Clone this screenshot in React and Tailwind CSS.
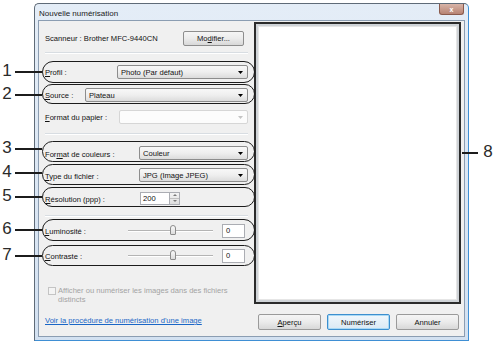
import React from 'react';

const Arrow = ({ color = '#000' }) => (
  <svg width="5" height="3" viewBox="0 0 5 3" className="shrink-0">
    <path d="M0 0H5L2.5 3Z" fill={color} />
  </svg>
);

function Combo({ text, w, disabled }) {
  return (
    <div
      className={`ml-auto flex h-[14px] items-center rounded-[2px] border pl-[3px] pr-[4px] ${w} ${
        disabled
          ? 'border-[#d6d6d6] bg-[#fcfcfc]'
          : 'border-[#8d8d8d] bg-linear-to-b from-[#f8f8f8] via-[#efefef] to-[#dcdcdc]'
      }`}
    >
      <span className="flex-1 truncate">{text}</span>
      <Arrow color={disabled ? '#c4c4c4' : '#000'} />
    </div>
  );
}

const U = ({ children }) => <span className="underline underline-offset-[1px]">{children}</span>;

function Sep() {
  return <div className="h-px w-full bg-[#d8dde2] shadow-[0_1px_0_#ffffff]" />;
}

function Slider() {
  return (
    <div className="relative h-[15px] w-[85px]">
      <div className="absolute left-0 right-0 top-[7px] h-[2px] border-t border-[#b4b4b4] bg-white" />
      <div className="absolute left-[42px] top-[2px] h-[10px] w-[6px] rounded-t-[3px] rounded-b-[1px] border border-[#8c8c8c] bg-linear-to-b from-[#fbfbfb] to-[#dcdcdc]" />
    </div>
  );
}

function Btn({ children, focus }) {
  return (
    <div
      className={`flex h-[16px] w-[63px] items-center justify-center rounded-[2px] border ${
        focus
          ? 'border-[#3c8fcf] bg-linear-to-b from-[#f0f7fc] to-[#dbe9f4] shadow-[inset_0_0_0_1px_#a9d9f5]'
          : 'border-[#9a9a9a] bg-linear-to-b from-[#f5f5f5] via-[#ebebeb] to-[#d8d8d8]'
      }`}
    >
      {children}
    </div>
  );
}

const ellipses = [
  { top: 61, h: 22 },
  { top: 84, h: 20 },
  { top: 141, h: 21 },
  { top: 164, h: 21 },
  { top: 187, h: 20 },
  { top: 219, h: 22 },
  { top: 245, h: 21 },
];

const nums = [
  { n: '1', y: 71 },
  { n: '2', y: 94 },
  { n: '3', y: 148 },
  { n: '4', y: 172 },
  { n: '5', y: 196 },
  { n: '6', y: 229 },
  { n: '7', y: 255 },
];

export default function App() {
  return (
    <div className="relative h-[346px] w-[500px] overflow-hidden bg-white font-['Liberation_Sans',Arial,sans-serif] text-[7.6px] leading-[9px] text-[#111]">
      {/* Window */}
      <div className="ml-[34px] mt-[3px] flex h-[338px] w-[435px] flex-col rounded-t-[5px] border border-[#5f6b78] border-r-[#3f8fd4] border-b-[#3f8fd4] bg-linear-to-b from-[#e4edf7] to-[#d3e1f1]">
        {/* Title bar */}
        <div className="flex h-[16px] items-start pl-[4px] pr-[4px]">
          <span className="mt-[5px] text-[8px] leading-[9px] text-[#1a1a1a]">Nouvelle numérisation</span>
          <div className="ml-auto flex h-[11px] w-[25px] items-center justify-center rounded-b-[3px] border border-t-0 border-[#8a5a4c] bg-linear-to-b from-[#d8b4a8] to-[#b78474]">
            <span className="text-[7px] font-bold leading-[7px] text-white">x</span>
          </div>
        </div>
        {/* Client */}
        <div className="mx-[3px] flex h-[317px] border border-[#8b9db2] bg-[#f0f0f0]">
          {/* Left column */}
          <div className="flex w-[215px] flex-col pl-[6px] pr-[6px] pt-[10px]">
            <div className="flex h-[15px] items-center">
              <span>Scanneur : Brother MFC-9440CN</span>
              <div className="ml-auto mr-[4px] flex h-[15px] w-[61px] items-center justify-center rounded-[2px] border border-[#8d8d8d] bg-linear-to-b from-[#f5f5f5] via-[#ebebeb] to-[#d8d8d8]">
                Mo<U>d</U>ifier...
              </div>
            </div>
            <div className="mt-[6px]"><Sep /></div>
            <div className="mt-[12px] flex h-[14px] items-center">
              <span><U>P</U>rofil :</span>
              <Combo text="Photo (Par défaut)" w="w-[131px]" />
            </div>
            <div className="mt-[9px] flex h-[14px] items-center">
              <span><U>S</U>ource :</span>
              <Combo text="Plateau" w="w-[163px]" />
            </div>
            <div className="mt-[8px] flex h-[14px] items-center">
              <span><U>F</U>ormat du papier :</span>
              <Combo text="" w="w-[129px]" disabled />
            </div>
            <div className="mt-[9px]"><Sep /></div>
            <div className="mt-[12px] flex h-[14px] items-center">
              <span className="mt-[3px]">For<U>m</U>at de couleurs :</span>
              <Combo text="Couleur" w="w-[109px]" />
            </div>
            <div className="mt-[8px] flex h-[14px] items-center">
              <span className="mt-[3px]"><U>T</U>ype du fichier :</span>
              <Combo text="JPG (Image JPEG)" w="w-[109px]" />
            </div>
            <div className="mt-[9px] flex h-[14px] items-center">
              <span className="mt-[2px] w-[95px]"><U>R</U>ésolution (ppp) :</span>
              <div className="flex h-[13px] w-[30px] items-center border border-[#abadb3] bg-white pl-[2px]">200</div>
              <div className="flex h-[13px] w-[10px] flex-col border border-l-0 border-[#abadb3] bg-linear-to-b from-[#f4f4f4] to-[#dedede]">
                <div className="flex flex-1 items-center justify-center border-b border-[#c0c0c0]">
                  <svg width="4" height="2" viewBox="0 0 4 2"><path d="M0 2H4L2 0Z" fill="#7a7a7a" /></svg>
                </div>
                <div className="flex flex-1 items-center justify-center">
                  <svg width="4" height="2" viewBox="0 0 4 2"><path d="M0 0H4L2 2Z" fill="#7a7a7a" /></svg>
                </div>
              </div>
            </div>
            <div className="mt-[10px]"><Sep /></div>
            <div className="mt-[7px] flex h-[15px] items-center">
              <span className="mt-[2px] w-[83px]"><U>L</U>uminosité :</span>
              <Slider />
              <div className="ml-[9px] flex h-[14px] w-[23px] items-center border border-[#abadb3] bg-white pl-[3px]">0</div>
            </div>
            <div className="mt-[10px] flex h-[15px] items-center">
              <span className="mt-[2px] w-[83px]"><U>C</U>ontraste :</span>
              <Slider />
              <div className="ml-[9px] flex h-[14px] w-[23px] items-center border border-[#abadb3] bg-white pl-[3px]">0</div>
            </div>
            <div className="mt-[23px] flex text-[#a3a3a3]">
              <div className="ml-[3px] mt-[1px] h-[8px] w-[8px] shrink-0 border border-[#c4c4c4] bg-[#f4f4f4]" />
              <div className="ml-[2px]">
                <div>Afficher ou numériser les images dans des fichiers</div>
                <div>distincts</div>
              </div>
            </div>
            <div className="mt-[12px] text-[#1a66c6] underline underline-offset-[1px]">
              Voir la procédure de numérisation d'une image
            </div>
          </div>
          {/* Right column */}
          <div className="flex w-[207px] flex-col pt-[1px]">
            <div className="h-[282px] w-[207px] border-2 border-[#2b2b2b] bg-[#cfd3d7] p-[2px]">
              <div className="h-full w-full border border-[#e6e6e6] bg-white" />
            </div>
            <div className="mt-[10px] flex gap-[6px] pl-[4px]">
              <Btn><U>A</U>perçu</Btn>
              <Btn focus>Numériser</Btn>
              <Btn>Annuler</Btn>
            </div>
          </div>
        </div>
      </div>

      {/* Annotation overlays */}
      {ellipses.map((e, i) => (
        <div
          key={i}
          className="absolute left-[42px] w-[213px] rounded-full border-[1.5px] border-[#1c1c1c]"
          style={{ top: e.top, height: e.h }}
        />
      ))}
      {nums.map((d) => (
        <React.Fragment key={d.n}>
          <div
            className="absolute left-[1px] w-[12px] text-center text-[17px] leading-[18px] text-[#2a2a2a]"
            style={{ top: d.y - 9 }}
          >
            {d.n}
          </div>
          <div className="absolute left-[15px] h-[1.5px] w-[27px] bg-[#1c1c1c]" style={{ top: d.y }} />
        </React.Fragment>
      ))}
      <div className="absolute left-[462px] top-[152px] h-[1.5px] w-[16px] bg-[#1c1c1c]" />
      <div className="absolute left-[482px] top-[143px] w-[12px] text-center text-[17px] leading-[18px] text-[#2a2a2a]">8</div>
    </div>
  );
}
